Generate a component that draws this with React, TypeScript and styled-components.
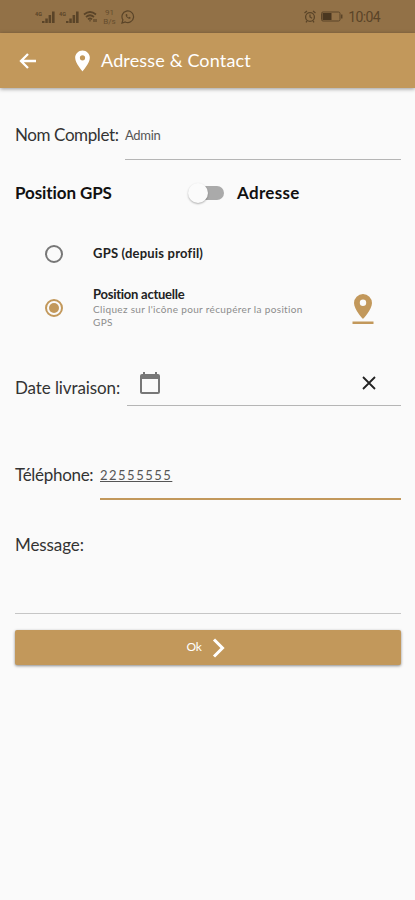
import React from "react";
import styled, { createGlobalStyle } from "styled-components";

const GOLD = "#c2985b";
const HAND = '"Lato", "Open Sans", sans-serif';

const GlobalStyle = createGlobalStyle`
  * { box-sizing: border-box; }
  body { margin: 0; background: #fafafa; font-family: ${HAND}; }
`;

const Screen = styled.div`
  width: 100%;
  height: 900px;
  overflow: hidden;
  background: #fafafa;
  display: flex;
  flex-direction: column;
`;

const StatusBar = styled.div`
  height: 33px;
  flex: none;
  padding: 0 35px 0 35px;
  display: flex;
  align-items: center;
  justify-content: space-between;
  background: #927147;
  color: #5a4428;
`;

const StatusGroup = styled.div<{ $gap: number }>`
  display: flex;
  align-items: center;
  gap: ${(p) => p.$gap}px;
  svg { display: block; }
`;

const NetSpeed = styled.div`
  width: 15px;
  font: 8px/9px Roboto, sans-serif;
  text-align: center;
  color: #654d2e;
`;

const Clock = styled.span`
  font: 14px/16px Roboto, sans-serif;
  letter-spacing: -0.6px;
`;

const AppBar = styled.header`
  height: 55px;
  flex: none;
  padding-left: 18px;
  display: flex;
  align-items: center;
  background: ${GOLD};
  color: #fff;
  box-shadow: 0 1px 4px rgba(0, 0, 0, 0.4);
  svg { display: block; }
`;

const BarPin = styled.span`
  margin-left: 35px;
`;

const Form = styled.main`
  padding: 0 14px 0 15px;
  display: flex;
  flex-direction: column;
`;

const Text = styled.span<{ $size?: number; $track?: number; $bold?: boolean; $tone?: string }>`
  font-size: ${(p) => p.$size ?? 17}px;
  font-weight: ${(p) => (p.$bold ? 700 : 400)};
  line-height: 1.2;
  letter-spacing: ${(p) => p.$track ?? 0}px;
  color: ${(p) => p.$tone ?? "#333"};
  white-space: nowrap;
`;

const Title = styled(Text)`
  margin: 0 0 0 9px;
`;

const FieldRow = styled.div<{ $label: number; $height: number; $top: number }>`
  display: grid;
  grid-template-columns: ${(p) => p.$label}px 1fr;
  height: ${(p) => p.$height}px;
  margin-top: ${(p) => p.$top}px;
`;

const Field = styled.div<{ $active?: boolean }>`
  display: flex;
  align-items: flex-start;
  border-bottom: ${(p) => (p.$active ? `2px solid ${GOLD}` : "1px solid #b5b5b5")};
`;

const FieldValue = styled(Text)<{ $underline?: boolean }>`
  margin-top: 3px;
  text-decoration: ${(p) => (p.$underline ? "underline" : "none")};
  text-underline-offset: 1px;
`;

const DateField = styled(Field)`
  justify-content: space-between;
  padding: 0 22px 0 11px;
  svg { display: block; margin-top: -7px; }
`;

const ModeRow = styled.div`
  display: flex;
  align-items: center;
  height: 26px;
  margin-top: 20px;
`;

const ModeName = styled.div`
  width: 173px;
`;

const Toggle = styled.div`
  width: 37px;
  height: 22px;
  margin-right: 12px;
  display: flex;
  align-items: center;
`;

const Track = styled.div`
  width: 31px;
  height: 14px;
  margin-left: 5px;
  border-radius: 7px;
  background: #aaa;
  display: flex;
  align-items: center;
`;

const Thumb = styled.div`
  flex: none;
  width: 20px;
  height: 20px;
  margin-left: -5px;
  border-radius: 50%;
  background: #fbfbfb;
  box-shadow: 0 1px 2px rgba(0, 0, 0, 0.3);
`;

const OptionRow = styled.div<{ $height: number; $top: number }>`
  display: grid;
  grid-template-columns: 18px 212px 1fr;
  column-gap: 30px;
  align-items: center;
  padding-left: 30px;
  height: ${(p) => p.$height}px;
  margin-top: ${(p) => p.$top}px;
`;

const Radio = styled.div<{ $on?: boolean }>`
  width: 18px;
  height: 18px;
  border-radius: 50%;
  border: 2px solid ${(p) => (p.$on ? GOLD : "#777")};
  display: grid;
  place-items: center;
`;

const RadioDot = styled.div`
  width: 10px;
  height: 10px;
  border-radius: 50%;
  background: ${GOLD};
`;

const OptionText = styled.div`
  display: flex;
  flex-direction: column;
`;

const OptionHint = styled(Text)`
  line-height: 13px;
`;

const Locate = styled.div`
  display: flex;
  margin: 2px 0 0 17px;
  svg { display: block; }
`;

const MessageLabel = styled.div`
  height: 79px;
  margin-top: 35px;
  border-bottom: 1px solid #c6c6c6;
`;

const OkButton = styled.button`
  height: 35px;
  margin-top: 16px;
  padding: 0 4px 0 0;
  border: 0;
  border-radius: 2px;
  background: ${GOLD};
  box-shadow: 0 1px 3px rgba(0, 0, 0, 0.45);
  display: flex;
  align-items: center;
  justify-content: center;
  gap: 10px;
  font-family: inherit;
  svg { display: block; }
`;

const Signal = () => (
  <svg width="20" height="14" viewBox="0 0 20 14" fill="currentColor">
    <text x="0" y="5.5" fontSize="5.5" fontWeight="700" fontFamily="Roboto">4G</text>
    <path d="M7 11h2.500v2H7zM10.300 8.500h2.500V13h-2.500zM13.600 5h2.500v8h-2.500zM17 1.500h2.600V13H17z" />
  </svg>
);

const Wifi = () => (
  <svg width="15" height="13" viewBox="0 0 15 13" fill="none" stroke="currentColor" strokeWidth="1.7">
    <path d="M1 4.5Q7 -.5 13 4.5M3 7Q7 3.5 11 7M5 9.3Q7 7.5 9 9.3" />
    <path d="M7 9.5v2M11 9v3M13 9v3" strokeWidth="1.2" />
  </svg>
);

const WhatsApp = () => (
  <svg width="14" height="14" viewBox="0 0 14 14" fill="none" stroke="currentColor" strokeWidth="1.2">
    <path d="M1 13l.9-3.1A5.8 5.8 0 1 1 4.3 12z" />
    <path d="M4.8 4.2c-.8 1.8 2.3 5 4.3 4.5l.7-1-1.5-.9-.7.7c-.8-.3-1.3-.8-1.6-1.5l.6-.7-.7-1.4z" fill="currentColor" stroke="none" />
  </svg>
);

const Alarm = () => (
  <svg width="12" height="13" viewBox="0 0 12 13" fill="none" stroke="currentColor" strokeWidth="1.3">
    <circle cx="6" cy="7" r="4.4" />
    <path d="M6 4.5V7l2 1.3M.5 3L3 1M11.5 3L9 1M3 11l-1 1.3M9 11l1 1.3" />
  </svg>
);

const Battery = () => (
  <svg width="22" height="11" viewBox="0 0 22 11" fill="none" stroke="currentColor">
    <rect x=".5" y="1" width="18.5" height="9" rx="1.5" />
    <rect x="1.5" y="2" width="9" height="7" fill="#4a3720" stroke="none" />
    <path d="M20.7 3.5v4" strokeWidth="1.5" />
  </svg>
);

const PIN = "M12 2C8.13 2 5 5.13 5 9c0 5.25 7 13 7 13s7-7.75 7-13c0-3.87-3.13-7-7-7zm0 9.5a2.5 2.5 0 1 1 0-5 2.5 2.5 0 0 1 0 5z";

export default function App() {
  return (
    <>
      <GlobalStyle />
      <Screen>
        <StatusBar>
          <StatusGroup $gap={4}>
            <Signal />
            <Signal />
            <Wifi />
            <NetSpeed>91<br />B/s</NetSpeed>
            <WhatsApp />
          </StatusGroup>
          <StatusGroup $gap={5}>
            <Alarm />
            <Battery />
            <Clock>10:04</Clock>
          </StatusGroup>
        </StatusBar>
        <AppBar>
          <svg width="20" height="20" viewBox="0 0 20 20" fill="none" stroke="#fff" strokeWidth="2.3">
            <path d="M18 10H3.5M10 3L3 10l7 7" />
          </svg>
          <BarPin>
            <svg width="19" height="22" viewBox="3 1.5 18 21" fill="#fff"><path d={PIN} /></svg>
          </BarPin>
          <Title $size={18} $track={0.15} $tone="#fff">Adresse &amp; Contact</Title>
        </AppBar>
        <Form>
          <FieldRow $label={110} $top={37} $height={35}>
            <Text $size={17} $track={-0.4}>Nom Complet:</Text>
            <Field><FieldValue $size={13} $track={-0.3} $tone="#555">Admin</FieldValue></Field>
          </FieldRow>

          <ModeRow>
            <ModeName><Text $bold $size={17} $track={-0.1} $tone="#111">Position GPS</Text></ModeName>
            <Toggle><Track><Thumb /></Track></Toggle>
            <Text $bold $size={17} $track={0.3} $tone="#111">Adresse</Text>
          </ModeRow>

          <OptionRow $top={28} $height={40}>
            <Radio />
            <Text $bold $size={13} $track={0.2} $tone="#222">GPS (depuis profil)</Text>
          </OptionRow>
          <OptionRow $top={10} $height={48}>
            <Radio $on><RadioDot /></Radio>
            <OptionText>
              <Text $bold $size={13} $track={-0.25} $tone="#222">Position actuelle</Text>
              <OptionHint $size={10} $track={0.34} $tone="#8c8c8c">Cliquez sur l'icône pour récupérer la position<br />GPS</OptionHint>
            </OptionText>
            <Locate>
              <svg width="22" height="31" viewBox="0 0 22 31" fill={GOLD}>
                <path fillRule="evenodd" d="M11 0a9 9 0 0 0-9 9c0 6.5 9 16 9 16s9-9.500 9-16a9 9 0 0 0-9-9zm0 12a3.200 3.200 0 1 1 0-6.400 3.200 3.200 0 0 1 0 6.400z" />
                <path d="M.5 27.500h21v2.500H.5z" />
              </svg>
            </Locate>
          </OptionRow>

          <FieldRow $label={112} $top={46} $height={28}>
            <Text $size={17} $track={-0.1}>Date livraison:</Text>
            <DateField>
              <svg width="24" height="24" viewBox="0 0 24 24" fill="#777">
                <path d="M20 3h-1V1h-2v2H7V1H5v2H4a2 2 0 0 0-2 2v16c0 1.100.900 2 2 2h16a2 2 0 0 0 2-2V5a2 2 0 0 0-2-2zm0 18H4V8h16z" />
              </svg>
              <svg width="20" height="24" viewBox="0 0 20 24" fill="none" stroke="#222" strokeWidth="1.800">
                <path d="M4 6l12 12M16 6L4 18" />
              </svg>
            </DateField>
          </FieldRow>

          <FieldRow $label={85} $top={59} $height={35}>
            <Text $size={17} $track={-0.3}>Téléphone:</Text>
            <Field $active><FieldValue $underline $size={13} $track={1.5} $tone="#555">22555555</FieldValue></Field>
          </FieldRow>

          <MessageLabel><Text $size={17} $track={-0.1}>Message:</Text></MessageLabel>

          <OkButton>
            <Text $size={12} $track={-0.3} $tone="#fff">Ok</Text>
            <svg width="14" height="20" viewBox="0 0 14 20" fill="none" stroke="#fff" strokeWidth="3">
              <path d="M2 1.500L10.500 10 2 18.500" />
            </svg>
          </OkButton>
        </Form>
      </Screen>
    </>
  );
}
